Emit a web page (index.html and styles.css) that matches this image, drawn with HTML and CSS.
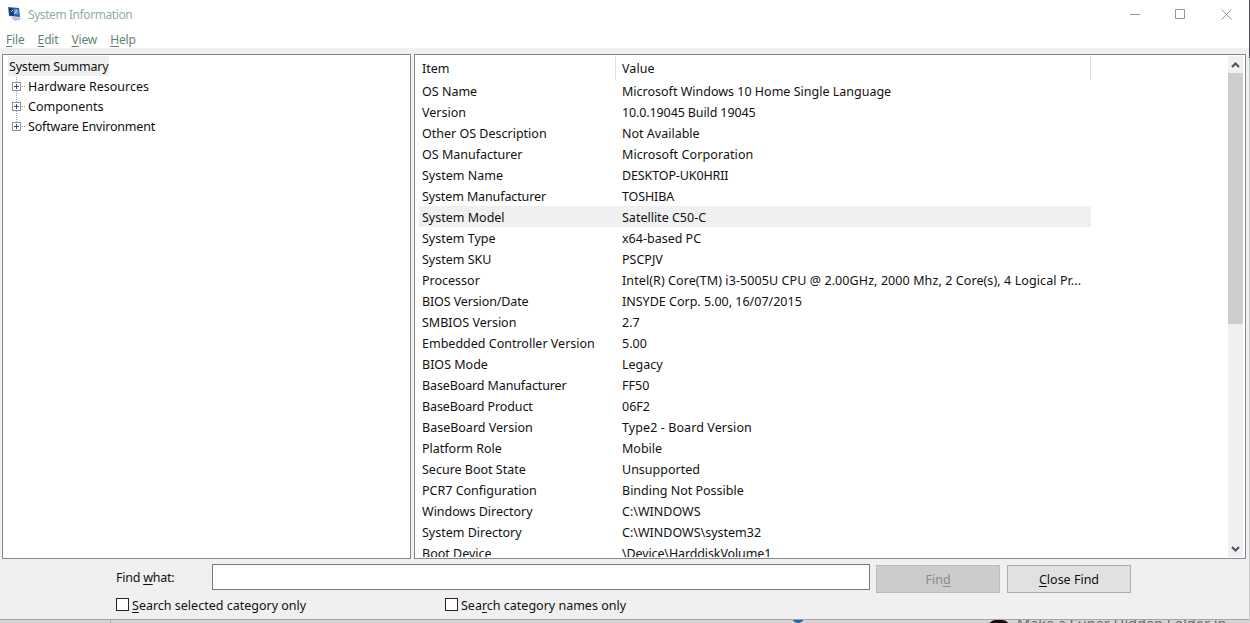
FILE: index.html
```html
<!DOCTYPE html>
<html lang="en">
  <head>
    <meta charset="UTF-8" />
    <meta name="viewport" content="width=device-width, initial-scale=1.0" />
    <title>System Information</title>
    <link rel="stylesheet" href="styles.css" />
  </head>
  <body>
    <div class="window">
      <header class="title-bar">
        <svg class="app-icon" width="16" height="16" viewBox="0 0 16 16">
          <path d="M1 1l11 1 1 9-11-1z" fill="#2460ad" />
          <path d="M2 2l4 .5 1 7-4-.5z" fill="#16356f" />
          <path d="M7 3l4 .4.7 5L8 8z" fill="#5aa0dd" />
          <path d="M4 12l3-1 6 .5 1 2-6 1.500z" fill="#b9c6d6" />
          <path d="M4 6l2-2M7 8l3-4" stroke="#d5e8fa" />
        </svg>
        <h1>System Information</h1>
        <div class="window-controls">
          <svg width="11" height="11" viewBox="0 0 11 11"><path d="M0 5.500h10" /></svg>
          <svg width="11" height="11" viewBox="0 0 11 11"><path d="M.5 .5h9v9h-9z" /></svg>
          <svg width="11" height="11" viewBox="0 0 11 11"><path d="M.5 .5l10 10M10.5 .5l-10 10" /></svg>
        </div>
      </header>

      <nav class="menu-bar">
        <a><u>F</u>ile</a>
        <a><u>E</u>dit</a>
        <a><u>V</u>iew</a>
        <a><u>H</u>elp</a>
      </nav>

      <main class="panes">
        <section class="tree">
          <div class="tree-root"><span>System Summary</span></div>
          <div class="tree-node"><i class="expander"></i><span>Hardware Resources</span></div>
          <div class="tree-node"><i class="expander"></i><span>Components</span></div>
          <div class="tree-node last"><i class="expander"></i><span>Software Environment</span></div>
        </section>

        <section class="details">
          <div class="list">
            <div class="row head"><span>Item</span><span class="wide">Value</span></div>
            <div class="row"><span>OS Name</span><span>Microsoft Windows 10 Home Single Language</span></div>
            <div class="row"><span>Version</span><span class="tight">10.0.19045 Build 19045</span></div>
            <div class="row"><span>Other OS Description</span><span>Not Available</span></div>
            <div class="row"><span>OS Manufacturer</span><span class="wide">Microsoft Corporation</span></div>
            <div class="row"><span>System Name</span><span class="tight">DESKTOP-UK0HRII</span></div>
            <div class="row"><span class="tight">System Manufacturer</span><span class="tight">TOSHIBA</span></div>
            <div class="row selected"><span>System Model</span><span>Satellite C50-C</span></div>
            <div class="row"><span>System Type</span><span>x64-based PC</span></div>
            <div class="row"><span>System SKU</span><span>PSCPJV</span></div>
            <div class="row"><span>Processor</span><span class="wide">Intel(R) Core(TM) i3-5005U CPU @ 2.00GHz, 2000 Mhz, 2 Core(s), 4 Logical Pr...</span></div>
            <div class="row"><span class="tight">BIOS Version/Date</span><span>INSYDE Corp. 5.00, 16/07/2015</span></div>
            <div class="row"><span>SMBIOS Version</span><span>2.7</span></div>
            <div class="row"><span>Embedded Controller Version</span><span>5.00</span></div>
            <div class="row"><span>BIOS Mode</span><span>Legacy</span></div>
            <div class="row"><span class="tight">BaseBoard Manufacturer</span><span>FF50</span></div>
            <div class="row"><span class="tight">BaseBoard Product</span><span>06F2</span></div>
            <div class="row"><span>BaseBoard Version</span><span class="wide">Type2 - Board Version</span></div>
            <div class="row"><span>Platform Role</span><span>Mobile</span></div>
            <div class="row"><span>Secure Boot State</span><span>Unsupported</span></div>
            <div class="row"><span>PCR7 Configuration</span><span>Binding Not Possible</span></div>
            <div class="row"><span>Windows Directory</span><span>C:\WINDOWS</span></div>
            <div class="row"><span>System Directory</span><span>C:\WINDOWS\system32</span></div>
            <div class="row"><span>Boot Device</span><span class="tight">\Device\HarddiskVolume1</span></div>
          </div>
          <div class="scrollbar">
            <svg width="15" height="17" viewBox="0 0 15 17"><path d="M4 11l3.500-3.500 3.500 3.500" /></svg>
            <div class="thumb"></div>
            <svg width="15" height="17" viewBox="0 0 15 17"><path d="M4 7l3.500 3.500 3.500-3.500" /></svg>
          </div>
        </section>
      </main>

      <footer class="find-bar">
        <div class="find-row">
          <label for="find">Find <u>w</u>hat:</label>
          <input id="find" type="text" />
          <button class="find-button" disabled>Fin<u>d</u></button>
          <button class="close-button"><u>C</u>lose Find</button>
        </div>
        <div class="options">
          <label><i class="checkbox"></i><span><u>S</u>earch selected category only</span></label>
          <label><i class="checkbox"></i><span>Sea<u>r</u>ch category names only</span></label>
        </div>
      </footer>
    </div>

    <div class="behind">
      <i class="divider"></i>
      <i class="blue-dot"></i>
      <i class="avatar"></i>
      <span>Make a Super Hidden Folder in</span>
    </div>
  </body>
</html>
```

FILE: styles.css
```css
* {
  box-sizing: border-box;
}

body {
  margin: 0;
  width: 1250px;
  height: 623px;
  overflow: hidden;
  background: linear-gradient(#4d4f60 58px, #b9c9c6 58px, #b9c9c6 70px, #c4c4c4 70px) right top / 1px 620px no-repeat, #d4d4d4;
  font-family: "Noto Sans", "Open Sans", sans-serif;
  font-size: 12.5px;
  color: #111;
}

u {
  text-underline-offset: 2px;
  text-decoration-thickness: 1px;
}

.window {
  width: 1249px;
  height: 620px;
  background-color: #f0f0f0;
  border-bottom: 1px solid #a5a5a5;
}

.title-bar {
  display: flex;
  align-items: center;
  height: 30px;
  padding-left: 7px;
  background-color: #fff;
}

.app-icon {
  margin-top: -2px;
}

.title-bar h1 {
  margin: -2px 0 0 5px;
  font-size: 12px;
  font-weight: normal;
  letter-spacing: -0.42px;
  color: #94ad9f;
}

.window-controls {
  display: flex;
  gap: 34px;
  margin: -2px 17px 0 auto;
}

.window-controls svg {
  fill: none;
  stroke: #8b9c9a;
}

.window-controls svg:last-child {
  margin-left: 1px;
}

.menu-bar {
  display: flex;
  gap: 13px;
  height: 18px;
  padding-left: 6px;
  background-color: #fff;
  font-size: 12px;
  letter-spacing: -0.15px;
  line-height: 20px;
  color: #5f8373;
}

.panes {
  display: flex;
  gap: 3px;
  height: 511px;
  padding: 6px 2px 0;
}

.tree {
  width: 409px;
  height: 505px;
  padding: 1px 5px;
  border: 1px solid #828790;
  background-color: #fff;
}

.tree-root,
.tree-node {
  display: flex;
  height: 20px;
  line-height: 22px;
}

.tree-root span {
  height: 20px;
  padding: 0 1px;
  letter-spacing: -0.2px;
  background-color: #f0f0f0;
}

.tree-node {
  align-items: center;
  padding-left: 4px;
  background: linear-gradient(#fff 50%, transparent 50%) 0 0 / 2px 2px, linear-gradient(#aaa, #aaa) 8px 0 / 1px 100% no-repeat;
}

.tree-node span {
  padding-top: 2px;
}

.tree-node.last {
  letter-spacing: -0.18px;
  background-size: 2px 2px, 1px 10px;
}

.expander {
  position: relative;
  width: 9px;
  height: 9px;
  margin-right: 7px;
  border: 1px solid #919191;
  background: linear-gradient(#2b4ea0, #2b4ea0) center / 5px 1px no-repeat, linear-gradient(#2b4ea0, #2b4ea0) center / 1px 5px no-repeat, #fff;
}

.expander::after {
  content: "";
  position: absolute;
  top: 3px;
  left: 9px;
  width: 3px;
  border-top: 1px dotted #999;
}

.details {
  display: flex;
  justify-content: space-between;
  width: 832px;
  height: 505px;
  border: 1px solid #828790;
  background-color: #fff;
}

.list {
  width: 676px;
  height: 502px;
  padding-top: 1px;
  overflow: hidden;
}

.row {
  display: grid;
  grid-template-columns: 200px 1fr;
  height: 21px;
  margin-left: 4px;
  padding-left: 3px;
  line-height: 23px;
  white-space: nowrap;
}

.row.head {
  height: 24px;
  line-height: 25px;
  border-right: 1px solid #e2e2e2;
  background: linear-gradient(#e2e2e2, #e2e2e2) 196px 0 / 1px 24px no-repeat;
}

.row.selected {
  background-color: #f0f0f0;
}

.tight {
  letter-spacing: -0.12px;
}

.wide {
  letter-spacing: 0.09px;
}

.scrollbar {
  display: flex;
  flex-direction: column;
  width: 15px;
  height: 501px;
  margin: 1px 2px 0 0;
  background-color: #f0f0f0;
}

.scrollbar svg {
  flex: none;
  fill: none;
  stroke: #505060;
  stroke-width: 2;
}

.thumb {
  height: 251px;
  margin-bottom: auto;
  background-color: #cdcdcd;
}

.find-bar {
  padding: 5px 0 0 116px;
}

.find-row {
  display: flex;
  height: 29px;
}

.find-row label {
  width: 96px;
  line-height: 28px;
  letter-spacing: -0.25px;
}

.find-row input {
  width: 658px;
  height: 26px;
  border: 1px solid #7a7a7a;
  background-color: #fff;
}

.find-row button {
  width: 124px;
  height: 28px;
  margin: 1px 0 0 7px;
  padding: 0;
  border: 1px solid #adadad;
  background-color: #e1e1e1;
  font: inherit;
  color: #111;
}

.find-row .find-button {
  margin-left: 6px;
  border: 1px dotted #b0b0b0;
  background-color: #ccc;
  color: #8a8a8a;
}

.options {
  display: flex;
  height: 22px;
}

.options label {
  display: flex;
  align-items: center;
  width: 329px;
  height: 22px;
  line-height: 22px;
}

.options span {
  padding-top: 3px;
}

.checkbox {
  width: 13px;
  height: 13px;
  margin-right: 3px;
  border: 1px solid #321d26;
  background-color: #fff;
}

/* page showing under the window */
.behind {
  display: flex;
  height: 3px;
  padding-left: 110px;
  overflow: hidden;
}

.divider {
  width: 1px;
  height: 3px;
  margin-right: 681px;
  background-color: #aaa;
}

.blue-dot {
  width: 12px;
  height: 12px;
  margin-top: -9px;
  border-radius: 50%;
  background-color: #1d63ad;
}

.avatar {
  width: 22px;
  height: 12px;
  margin-left: 184px;
  border-radius: 8px 8px 0 0;
  background-color: #160a10;
}

.behind span {
  margin: -5px 0 0 7px;
  font-family: "Open Sans", sans-serif;
  font-size: 14.6px;
  line-height: 16px;
  white-space: nowrap;
  color: #686868;
}
```
